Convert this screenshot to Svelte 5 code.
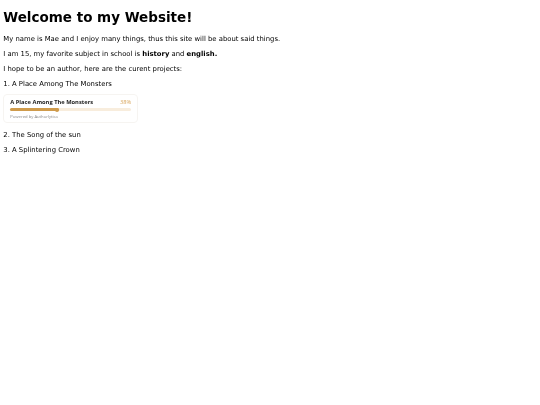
<script>
	const progress = 38;
</script>

<main class="page">
	<h1>Welcome to my Website!</h1>
	<p>My name is Mae and I enjoy many things, thus this site will be about said things.</p>
	<p>I am 15, my favorite subject in school is <b>history</b> and <b>english.</b></p>
	<p>I hope to be an author, here are the curent projects:</p>
	<p>1. A Place Among The Monsters</p>
	<div class="card">
		<div class="card-head">
			<span class="card-title">A Place Among The Monsters</span>
			<span class="card-pct">{progress}%</span>
		</div>
		<div class="track">
			<div class="fill" style="width: {progress + 2}%"></div>
		</div>
		<div class="powered">Powered by Authorlytica</div>
	</div>
	<p>2. The Song of the sun</p>
	<p>3. A Splintering Crown</p>
</main>

<style>
	:global(body) {
		background: #fff;
	}
	.page {
		padding: 0 3.3px;
		font-family: "DejaVu Sans", sans-serif;
		font-size: 6.85px;
		color: #000;
		will-change: transform;
	}
	h1 {
		margin: 0;
		padding-top: 9px;
		font-size: 13.5px;
		line-height: 17px;
		color: #000;
	}
	p {
		margin: 0;
		padding-top: 6px;
		line-height: 9px;
	}
	h1 + p {
		padding-top: 9px;
	}
	.card {
		box-sizing: border-box;
		width: 135px;
		height: 29px;
		margin: 5px 0 2px;
		padding: 3px 6px;
		border: 1px solid #f6f4f1;
		border-radius: 4px;
		font-family: "Open Sans", sans-serif;
	}
	.card-head {
		display: flex;
		justify-content: space-between;
		font-size: 5.75px;
		line-height: 9px;
	}
	.card-title {
		font-weight: 700;
		color: #222;
	}
	.card-pct {
		color: #d9a860;
	}
	.track {
		height: 3px;
		margin-top: 1px;
		border-radius: 2px;
		background: #f8eddd;
	}
	.fill {
		position: relative;
		height: 100%;
		border-radius: 2px;
		background: #cf9b4c;
	}
	.fill::after {
		content: "";
		position: absolute;
		right: 0;
		top: -0.5px;
		width: 4px;
		height: 4px;
		border-radius: 50%;
		background: #cf9b4c;
	}
	.powered {
		margin-top: 3px;
		font-size: 4.2px;
		line-height: 6px;
		color: #888;
	}
</style>
